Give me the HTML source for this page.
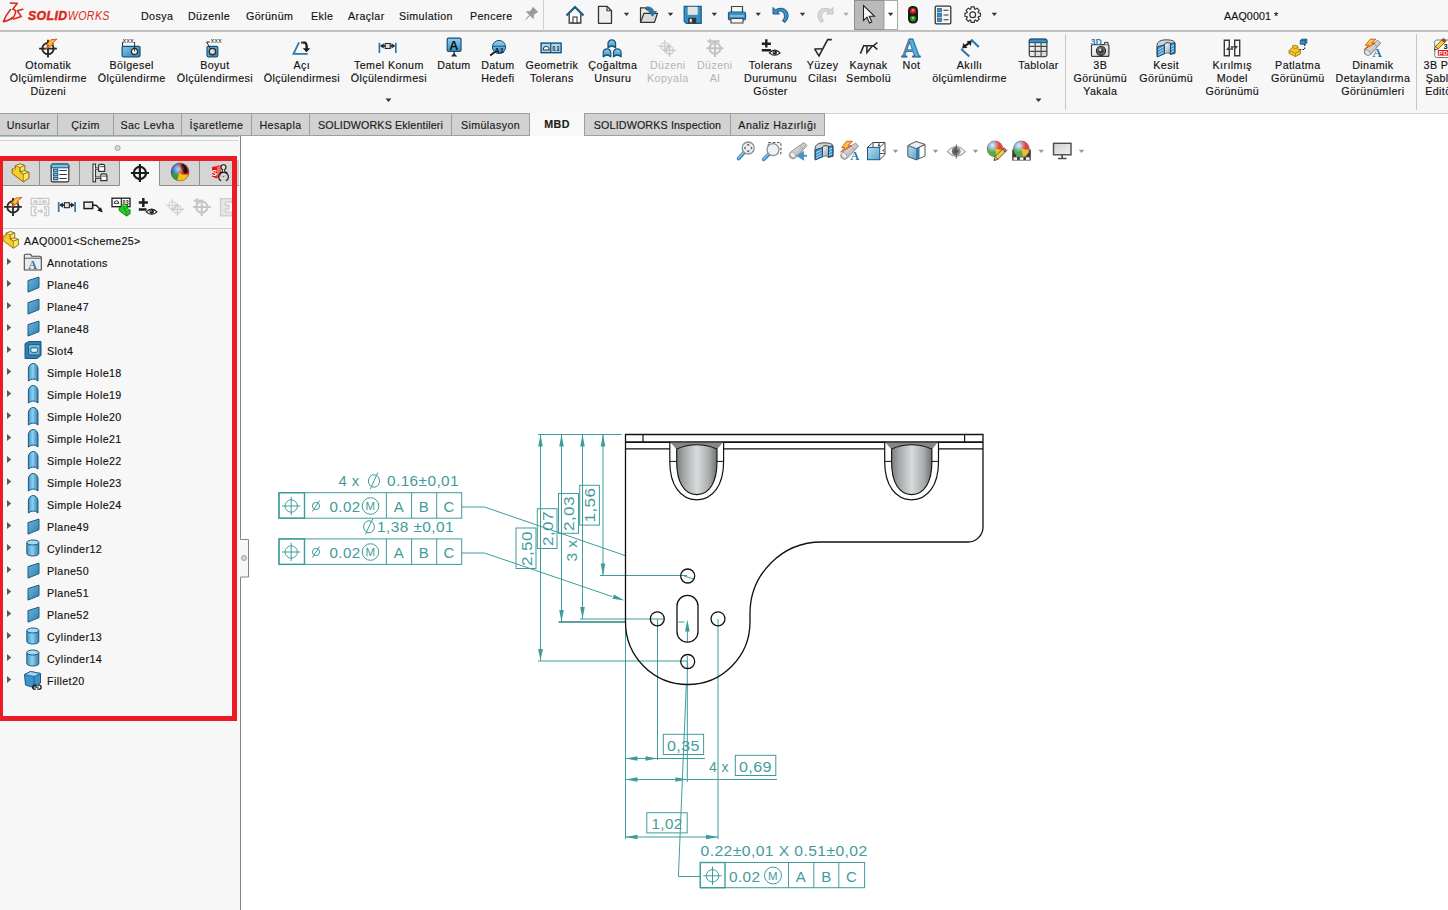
<!DOCTYPE html>
<html><head><meta charset="utf-8">
<style>
*{box-sizing:border-box;margin:0;padding:0}
html,body{width:1448px;height:910px;overflow:hidden;background:#fff}
body{font-family:"Liberation Sans",sans-serif;font-size:10.7px;letter-spacing:.4px;color:#111;position:relative;-webkit-text-stroke:.15px #111}
.abs{position:absolute}
#title{left:0;top:0;width:1448px;height:32px;background:#f7f7f7;border-bottom:2px solid #c0c0c0}
#ribbon{left:0;top:32px;width:1448px;height:81px;background:#f7f7f7}
.menu{position:absolute;top:9.5px;color:#111;white-space:nowrap}
.rl{position:absolute;top:58.5px;transform:translateX(-50%);text-align:center;line-height:13.2px;white-space:nowrap;color:#111}
.rl.dis{color:#b4b4b4;-webkit-text-stroke:0}
#tabs{left:0;top:113px;width:1448px;height:23px}
.tab{position:absolute;top:0;height:23px;background:#d2d2d2;border:1px solid #9e9e9e;border-left:none;text-align:center;line-height:22px;color:#222;white-space:nowrap}
.tab.act{background:#f8f8f8;border-top:none;border-bottom:none;font-weight:bold}
#panel{left:0;top:136px;width:240px;height:774px;background:#f7f7f7}
.tr{position:absolute;left:47px;color:#111;white-space:nowrap;line-height:14px}
.ar{position:absolute;left:6px;width:0;height:0;border-left:5px solid #555;border-top:4px solid transparent;border-bottom:4px solid transparent}
</style></head><body>
<div id="title" class="abs"></div>
<div id="ribbon" class="abs"></div>
<div id="tabs" class="abs"><div class="tab" style="left:0px;width:58px">Unsurlar</div><div class="tab" style="left:58px;width:56px">Çizim</div><div class="tab" style="left:114px;width:68px">Sac Levha</div><div class="tab" style="left:182px;width:70px">İşaretleme</div><div class="tab" style="left:252px;width:58px">Hesapla</div><div class="tab" style="left:310px;width:142px;letter-spacing:.15px">SOLIDWORKS Eklentileri</div><div class="tab" style="left:452px;width:78px">Simülasyon</div><div class="tab act" style="left:530px;width:55px">MBD</div><div class="tab" style="left:585px;width:146px;letter-spacing:.15px">SOLIDWORKS Inspection</div><div class="tab" style="left:731px;width:94px">Analiz Hazırlığı</div></div>
<div id="panel" class="abs"></div><div class="abs" style="left:825px;top:113px;width:623px;height:1px;background:#d2d2d2"></div>
<div class="menu" style="left:141px">Dosya</div><div class="menu" style="left:188px">Düzenle</div><div class="menu" style="left:246px">Görünüm</div><div class="menu" style="left:311px">Ekle</div><div class="menu" style="left:348px">Araçlar</div><div class="menu" style="left:399px">Simulation</div><div class="menu" style="left:470px">Pencere</div><div class="menu" style="left:1224px;letter-spacing:.1px">AAQ0001 *</div>
<div class="rl" style="left:48.3px">Otomatik<br>Ölçümlendirme<br>Düzeni</div><div class="rl" style="left:131.7px">Bölgesel<br>Ölçülendirme</div><div class="rl" style="left:214.9px">Boyut<br>Ölçülendirmesi</div><div class="rl" style="left:301.9px">Açı<br>Ölçülendirmesi</div><div class="rl" style="left:388.9px">Temel Konum<br>Ölçülendirmesi</div><div class="rl" style="left:453.9px">Datum</div><div class="rl" style="left:497.9px">Datum<br>Hedefi</div><div class="rl" style="left:551.9px">Geometrik<br>Tolerans</div><div class="rl" style="left:612.8px">Çoğaltma<br>Unsuru</div><div class="rl dis" style="left:667.8px">Düzeni<br>Kopyala</div><div class="rl dis" style="left:714.8px">Düzeni<br>Al</div><div class="rl" style="left:770.6px">Tolerans<br>Durumunu<br>Göster</div><div class="rl" style="left:822.6px">Yüzey<br>Cilası</div><div class="rl" style="left:868.6px">Kaynak<br>Sembolü</div><div class="rl" style="left:911.5px">Not</div><div class="rl" style="left:969.6px">Akıllı<br>ölçümlendirme</div><div class="rl" style="left:1038.5px">Tablolar</div><div class="rl" style="left:1100.3px">3B<br>Görünümü<br>Yakala</div><div class="rl" style="left:1166.2px">Kesit<br>Görünümü</div><div class="rl" style="left:1232.3px">Kırılmış<br>Model<br>Görünümü</div><div class="rl" style="left:1297.8px">Patlatma<br>Görünümü</div><div class="rl" style="left:1372.9px">Dinamik<br>Detaylandırma<br>Görünümleri</div><div class="rl" style="left:1443.5px">3B PDF<br>Şablon<br>Editörü</div>
<!--ICONS_PANEL_START--><svg class="abs" style="left:0;top:136px" width="250" height="774" viewBox="0 136 250 774"><defs>
<linearGradient id="pl" x1="0" y1="0" x2="1" y2="1"><stop offset="0" stop-color="#6cb4dc"/><stop offset="1" stop-color="#2f7fb0"/></linearGradient>
<linearGradient id="cy" x1="0" y1="0" x2="1" y2="0"><stop offset="0" stop-color="#3f93c6"/><stop offset="0.45" stop-color="#8fd0f0"/><stop offset="1" stop-color="#2f7fb0"/></linearGradient>
<radialGradient id="ball" cx="0.4" cy="0.35" r="0.7"><stop offset="0" stop-color="#fff" stop-opacity="0.7"/><stop offset="0.5" stop-color="#fff" stop-opacity="0"/></radialGradient>
<g id="ypart"><path d="M-8.4,-3.9 L-5.3,-5.3 V-7.2 L-0.4,-9 L4.1,-7.5 V-2.2 L8.2,-0.6 V5.2 L2.7,8.8 L-8.4,0.5 Z" fill="#f6cf2a" stroke="#8a6508" stroke-width="1" stroke-linejoin="round"/><path d="M-5.3,-7.2 L-0.4,-9 L4.1,-7.5 L-0.6,-5.5 Z" fill="#fdf0a0" stroke="#8a6508" stroke-width="0.7" stroke-linejoin="round"/><path d="M-0.6,-5.5 L4.1,-7.5 V-2.2 L-0.6,-1.1 Z" fill="#fbe56a" stroke="#8a6508" stroke-width="0.7" stroke-linejoin="round"/><path d="M-0.6,-1.1 L4.1,-2.2 L8.2,-0.6 L2.7,1.1 Z" fill="#fdf0a0" stroke="#8a6508" stroke-width="0.7" stroke-linejoin="round"/><path d="M2.7,1.1 L8.2,-0.6 V5.2 L2.7,8.8 Z" fill="#fbe56a" stroke="#8a6508" stroke-width="0.7" stroke-linejoin="round"/><path d="M-8.4,-3.9 L-5.3,-5.3 L-5.3,-3.4 L-7,-2.7 Z" fill="#fdf0a0" stroke="#8a6508" stroke-width="0.6"/><path d="M-0.6,-5.5 V-1.1 L2.7,1.1" fill="none" stroke="#8a6508" stroke-width="0.7"/></g>
<g id="gpart"><path d="M-8.4,-3.9 L-5.3,-5.3 V-7.2 L-0.4,-9 L4.1,-7.5 V-2.2 L8.2,-0.6 V5.2 L2.7,8.8 L-8.4,0.5 Z" fill="#1fd11f" stroke="#0a6a0a" stroke-width="1.2" stroke-linejoin="round"/><path d="M-5.3,-7.2 L-0.4,-9 L4.1,-7.5 L-0.6,-5.5 Z M-0.6,-1.1 L4.1,-2.2 L8.2,-0.6 L2.7,1.1 Z" fill="#6af06a" stroke="#0a6a0a" stroke-width="0.7" stroke-linejoin="round"/><path d="M-0.6,-5.5 V-1.1 L2.7,1.1 V8.8" fill="none" stroke="#0a6a0a" stroke-width="0.8"/></g>
<linearGradient id="bx" x1="0" y1="0" x2="1" y2="1"><stop offset="0" stop-color="#7cc6ec"/><stop offset="1" stop-color="#2f84b6"/></linearGradient>
<linearGradient id="yl" x1="0" y1="0" x2="1" y2="1"><stop offset="0" stop-color="#ffe04a"/><stop offset="1" stop-color="#f39a1e"/></linearGradient>
<linearGradient id="grp" x1="0" y1="0" x2="1" y2="1"><stop offset="0" stop-color="#ffffff"/><stop offset="1" stop-color="#cfcfcf"/></linearGradient>
<g id="plane"><path d="M-5.5,-4 L5.5,-7.5 V3 L-5.5,7.5 Z" fill="url(#pl)" stroke="#1b5a80" stroke-width="1" stroke-linejoin="round"/></g>
<g id="hole"><path d="M-4.8,8.5 V-3.5 A4.8,5.5 0 0 1 4.8,-3.5 V8.5 Q0,4.5 -4.8,8.5 Z" fill="url(#cy)" stroke="#1b5a80" stroke-width="1" stroke-linejoin="round"/></g>
<g id="cyl"><path d="M-6,-5.5 V5.5 A6,2.5 0 0 0 6,5.5 V-5.5" fill="url(#cy)" stroke="#1b5a80" stroke-width="1"/><ellipse cx="0" cy="-5.5" rx="6" ry="2.5" fill="#a6dbf5" stroke="#1b5a80" stroke-width="1"/></g>
<g id="arr"><path d="M0,-3.6 L4.2,0 L0,3.6 Z" fill="#5a5a5a"/></g>
</defs><path d="M0,136.5 H239" stroke="#a9c4d4" stroke-width="1"/><path d="M0,140.5 H238" stroke="#d4d4d4" stroke-width="1"/><circle cx="117.6" cy="148" r="2.6" fill="#d8d8d8" stroke="#9a9a9a" stroke-width="0.8"/><rect x="0" y="160" width="39.5" height="25.5" fill="#d5d5d5"/><path d="M0,185.5 H39.5" stroke="#8e8e8e"/><rect x="39.5" y="160" width="40.0" height="25.5" fill="#d5d5d5"/><path d="M39.5,185.5 H79.5" stroke="#8e8e8e"/><rect x="79.5" y="160" width="40.0" height="25.5" fill="#d5d5d5"/><path d="M79.5,185.5 H119.5" stroke="#8e8e8e"/><rect x="119.5" y="160" width="40.0" height="26" fill="#f7f7f7"/><rect x="159.5" y="160" width="40.0" height="25.5" fill="#d5d5d5"/><path d="M159.5,185.5 H199.5" stroke="#8e8e8e"/><rect x="199.5" y="160" width="39.5" height="25.5" fill="#d5d5d5"/><path d="M199.5,185.5 H239" stroke="#8e8e8e"/><path d="M39.5,160 V185.5" stroke="#8e8e8e" stroke-width="1"/><path d="M79.5,160 V185.5" stroke="#8e8e8e" stroke-width="1"/><path d="M119.5,160 V185.5" stroke="#8e8e8e" stroke-width="1"/><path d="M159.5,160 V185.5" stroke="#8e8e8e" stroke-width="1"/><path d="M199.5,160 V185.5" stroke="#8e8e8e" stroke-width="1"/><use href="#ypart" transform="translate(20.6,173)"/><g transform="translate(60,173)"><rect x="-8.8" y="-8.9" width="17.6" height="17.7" rx="1.6" fill="#fdfdfd" stroke="#333" stroke-width="1.2"/><path d="M-8.8,-5.2 V-7.3 Q-8.8,-8.9 -7.2,-8.9 H7.2 Q8.8,-8.9 8.8,-7.3 V-5.2 Z" fill="#7cc0e4" stroke="#14507a" stroke-width="1"/><rect x="-6.6" y="-3.8" width="4.4" height="2.6" fill="#7cc0e4" stroke="#14507a" stroke-width="1"/><rect x="-6.6" y="0.2" width="4.4" height="2.6" fill="#7cc0e4" stroke="#14507a" stroke-width="1"/><rect x="-6.6" y="4.2" width="4.4" height="2.6" fill="#7cc0e4" stroke="#14507a" stroke-width="1"/><path d="M-0.6,-2.5 H6.8 M-0.6,1.5 H6.8 M-0.6,5.5 H6.8" stroke="#333" stroke-width="1.1"/></g><g transform="translate(99.6,173)"><rect x="-6.6" y="-8.9" width="2.5" height="17.7" fill="#fff" stroke="#333" stroke-width="1.1"/><path d="M-4.1,-4.4 H-1 M-4.1,4.7 H1.2" stroke="#333" stroke-width="2.4"/><path d="M-4.1,-4.4 H-1 M-4.1,4.7 H1.2" stroke="#fff" stroke-width="0.7"/><path d="M-1,-7 Q-1,-8.6 0.6,-8.6 H3.5 Q5.1,-8.6 5.1,-7 V-1.7 H-1 Z" fill="#fff" stroke="#333" stroke-width="1.2" stroke-linejoin="round"/><path d="M0.3,-6.3 H5" stroke="#333" stroke-width="0.9"/><path d="M1.2,2.4 Q1.2,0.8 2.8,0.8 H5.7 Q7.3,0.8 7.3,2.4 V7.7 H1.2 Z" fill="#fff" stroke="#333" stroke-width="1.2" stroke-linejoin="round"/><path d="M2.5,3.1 H7.2" stroke="#333" stroke-width="0.9"/></g><g transform="translate(139.9,173)"><circle cx="0" cy="0" r="6.1" fill="none" stroke="#1a1a1a" stroke-width="2.2"/><path d="M-9,0 H9.1 M0,-9 V8.9" stroke="#1a1a1a" stroke-width="2.2"/></g><g transform="translate(180.1,171.9)"><circle r="9" fill="#d8271c"/><path d="M-1,1 L-9,1.5 A9,9 0 0 1 -1.5,-8.87 Z" fill="#2a6fc9"/><path d="M-1,1 L-9,1.5 A9,9 0 0 0 -3,8.49 Z" fill="#28a13c"/><path d="M-1,1 L-3,8.49 A9,9 0 0 0 8.6,2.6 Q4,3.5 -1,1 Z" fill="#f2c21a"/><ellipse cx="4.1" cy="-3.2" rx="2.6" ry="5.2" transform="rotate(-32 4.1 -3.2)" fill="#1a1210"/><circle r="9" fill="url(#ball)"/><circle r="9" fill="none" stroke="#6a3a2a" stroke-width="0.6" opacity="0.7"/></g><g transform="translate(220,173)"><path d="M-8,-6 L0.5,-8 V3 L-3,5.3 L-8,3.5 Z" fill="#ee2a24"/><path d="M0.5,-8 L-3,-5.5 V5.3 L0.5,3 Z" fill="#f46a60"/><path d="M-8,-6 L-3,-5.5 V5.3 L-8,3.5 Z" fill="#e8141c"/><text x="-5.4" y="2.6" font-size="8.5" font-weight="bold" fill="#fff" text-anchor="middle" font-family="Liberation Sans">S</text><circle cx="3.5" cy="-5.8" r="2.5" fill="#f6dada" stroke="#1a1a1a" stroke-width="1.1"/><path d="M2.6,-3.4 L2,-0.6 H5 L4.4,-3.4" fill="#fff" stroke="#1a1a1a" stroke-width="1"/><path d="M0,-0.6 H7.4" stroke="#1a1a1a" stroke-width="1.3"/><path d="M1.2,7.8 A4.3,4.3 0 0 1 1.8,-0.3 M5.8,7.8 A4.3,4.3 0 0 0 5.2,-0.3" fill="none" stroke="#1a1a1a" stroke-width="1.1"/><path d="M2,3.8 L4.8,2.4 L4,3.9 Z" fill="#e8141c"/></g><g transform="translate(13,206.9)"><circle cx="0" cy="0" r="5.7" fill="none" stroke="#2a2a2a" stroke-width="1.9"/><path d="M-8.9,0 H8.9 M0,-8.9 V9" stroke="#2a2a2a" stroke-width="1.9" fill="none"/><path d="M8.9,-9.5 L2.7,-8.8 L-1.8,-3.4 L1,-3.4 L-2.7,0.7 L6,-4.7 L3.7,-4.8 Z" fill="url(#yl)" stroke="#d4501a" stroke-width="0.9" stroke-linejoin="round"/></g><g transform="translate(40,207)" fill="none" stroke="#c9c9c9" stroke-width="1.2"><rect x="-8.8" y="-8.6" width="17.6" height="6"/><path d="M0,-8.6 V-2.6"/><path d="M-6.2,-4.6 A1.8,1.8 0 0 1 -2.6,-4.6 Z M2.6,-4.6 A1.8,1.8 0 0 1 6.2,-4.6 Z"/><path d="M-8.8,-0.3 H-4 V2.5 H-5.5 V5.8 H-4 V8.6 H-8.8 Z M8.8,-0.3 H4.5 V2 H6.3 V6.3 H4.5 V8.6 H8.8 Z"/><path d="M-2.5,4.2 H1.5" stroke-width="1.8"/><path d="M0.5,1.6 L3.6,4.2 L0.5,6.8 Z" fill="#c9c9c9" stroke="none"/></g><g transform="translate(66.9,206.7)"><path d="M-8.2,-4.7 V5.3 M8.2,-4.7 V5.3" stroke="#2a78ad" stroke-width="1.7"/><path d="M-6.5,-1.6 H6.5" stroke="#2a2a2a" stroke-width="1.7"/><path d="M-7.7,-1.6 L-4,-4.3 V1.1 Z M7.7,-1.6 L4,-4.3 V1.1 Z" fill="#2a2a2a"/><rect x="-2.5" y="-4" width="5" height="5" fill="#e2e2e2" stroke="#2a2a2a" stroke-width="1.1"/></g><g transform="translate(93.4,207)"><rect x="-9.4" y="-4.9" width="8.7" height="6.5" fill="url(#grp)" stroke="#1a1a1a" stroke-width="1.4"/><path d="M-0.7,-1.7 H1.8 Q3.2,-1.7 4,-0.6 L6.5,2.2" stroke="#1a1a1a" stroke-width="1.5" fill="none"/><path d="M9.4,5.4 L3.8,3.6 L7.6,0.2 Z" fill="#1a1a1a"/></g><g transform="translate(121,207)"><rect x="-9" y="-8.8" width="18" height="8.5" fill="#fff" stroke="#1a1a1a" stroke-width="1.3"/><path d="M0.3,-8.8 V-0.3" stroke="#1a1a1a" stroke-width="1.1"/><path d="M-6.8,-3.6 A2.3,2.6 0 0 1 -2.2,-3.6 Z" fill="#fff" stroke="#1a1a1a" stroke-width="0.9"/><text x="4.7" y="-2" font-size="6.6" font-weight="bold" fill="#1a1a1a" text-anchor="middle" font-family="Liberation Sans" textLength="6.4" lengthAdjust="spacingAndGlyphs">03</text><use href="#gpart" transform="translate(3.7,3.3) scale(0.66)"/></g><g transform="translate(147.5,207.5)"><path d="M-8.7,-5.1 H0.4 M-4.2,-9.6 V-0.6 M-8.7,1.9 H-0.9" stroke="#1f1f1f" stroke-width="2.5"/><path d="M-1.3,4.4 Q4.1,-1.1 9.5,4.4 Q4.1,9.1 -1.3,4.4 Z" fill="#fff" stroke="#1f1f1f" stroke-width="1.1"/><circle cx="4.2" cy="4.1" r="2.3" fill="#1f1f1f"/><circle cx="3.5" cy="3.5" r="0.7" fill="#ddd"/></g><g transform="translate(175,207.3)"><circle cx="-2.7" cy="-2" r="3.8" fill="none" stroke="#d4d4d4" stroke-width="1.2"/><path d="M-9.2,-2 H3.8 M-2.7,-8.5 V4.5" stroke="#d4d4d4" stroke-width="1.2"/><circle cx="2.5" cy="2.1" r="3.8" fill="none" stroke="#cacaca" stroke-width="1.2"/><path d="M-4,2.1 H9 M2.5,-4.4 V8.6" stroke="#cacaca" stroke-width="1.2"/></g><g transform="translate(201.8,207.1)"><circle cx="0" cy="0" r="5.6" fill="none" stroke="#c6c6c6" stroke-width="2"/><path d="M-8.8,0 H9 M0,-6.3 V8.8" stroke="#c6c6c6" stroke-width="2"/><path d="M-4.5,-6.4 H1.5" stroke="#c6c6c6" stroke-width="2.2"/><path d="M-8.6,-6.4 L-4,-9.4 V-3.4 Z" fill="#c6c6c6"/></g><g transform="translate(229,207.2)" fill="#e6e6e6" stroke="#cdcdcd" stroke-width="1.3"><path d="M-8.5,-8.6 H3 V-5 H-3.5 V-2 H0 V2 H-3.5 V5 H3 V8.6 H-8.5 Z"/></g><path d="M3,228.5 H232" stroke="#cfcfcf" stroke-width="1"/><use href="#ypart" transform="translate(10.8,240) scale(0.93)"/><use href="#arr" transform="translate(7,261.5)"/><g transform="translate(32.8,262)"><path d="M-8.5,8 V-6.5 Q-8.5,-7.8 -7.2,-7.8 H-2.5 L-1,-5.8 H7.2 Q8.5,-5.8 8.5,-4.5 V8 Z" fill="#ececec" stroke="#4a4a4a" stroke-width="1.1" stroke-linejoin="round"/><path d="M-8.5,-3.8 H8.5" stroke="#4a4a4a" stroke-width="0.9"/><text x="0" y="6.5" font-size="12" font-weight="bold" fill="#2a78ad" text-anchor="middle" font-family="Liberation Serif">A</text></g><use href="#arr" transform="translate(7,283.5)"/><use href="#plane" transform="translate(33.5,284.6)"/><use href="#arr" transform="translate(7,305.5)"/><use href="#plane" transform="translate(33.5,306.6)"/><use href="#arr" transform="translate(7,327.5)"/><use href="#plane" transform="translate(33.5,328.6)"/><use href="#arr" transform="translate(7,349.5)"/><g transform="translate(33,350)"><path d="M-8,-6.5 L-4,-8.5 H8 V5.5 L4,8.5 H-8 Z" fill="#2f7fb0" stroke="#1b5a80" stroke-width="1" stroke-linejoin="round"/><path d="M-4.5,-5.5 H7 V5 H-4.5 Z" fill="#6cb4dc" stroke="#1b5a80" stroke-width="0.9"/><rect x="-2.3" y="-2.2" width="7" height="4.6" rx="2" fill="#d9eefa" stroke="#1b5a80" stroke-width="1"/></g><use href="#arr" transform="translate(7,371.5)"/><use href="#hole" transform="translate(33.2,372.5)"/><use href="#arr" transform="translate(7,393.5)"/><use href="#hole" transform="translate(33.2,394.5)"/><use href="#arr" transform="translate(7,415.5)"/><use href="#hole" transform="translate(33.2,416.5)"/><use href="#arr" transform="translate(7,437.5)"/><use href="#hole" transform="translate(33.2,438.5)"/><use href="#arr" transform="translate(7,459.5)"/><use href="#hole" transform="translate(33.2,460.5)"/><use href="#arr" transform="translate(7,481.5)"/><use href="#hole" transform="translate(33.2,482.5)"/><use href="#arr" transform="translate(7,503.5)"/><use href="#hole" transform="translate(33.2,504.5)"/><use href="#arr" transform="translate(7,525.5)"/><use href="#plane" transform="translate(33.5,526.6)"/><use href="#arr" transform="translate(7,547.5)"/><use href="#cyl" transform="translate(32.8,548)"/><use href="#arr" transform="translate(7,569.5)"/><use href="#plane" transform="translate(33.5,570.6)"/><use href="#arr" transform="translate(7,591.5)"/><use href="#plane" transform="translate(33.5,592.6)"/><use href="#arr" transform="translate(7,613.5)"/><use href="#plane" transform="translate(33.5,614.6)"/><use href="#arr" transform="translate(7,635.5)"/><use href="#cyl" transform="translate(32.8,636)"/><use href="#arr" transform="translate(7,657.5)"/><use href="#cyl" transform="translate(32.8,658)"/><use href="#arr" transform="translate(7,679.5)"/><g transform="translate(32.5,680)"><path d="M-8,-5.5 L-2,-8.5 L8,-6.5 V3 L1,7.5 L-7,5 Z" fill="#3f93c6" stroke="#1b5a80" stroke-width="1" stroke-linejoin="round"/><path d="M-8,-5.5 L-2,-8.5 L8,-6.5 L1.5,-3.5 Z" fill="#9fd6f2" stroke="#1b5a80" stroke-width="0.8"/><path d="M1.5,-3.5 V7.5" stroke="#1b5a80" stroke-width="0.8"/><path d="M4.2,5.2 H2.2 a2,2 0 0 0 0,4 H3.4 M4.6,9.2 H6.6 a2,2 0 0 0 0,-4 H5.4 M2.8,7.2 H6" fill="none" stroke="#1a1a1a" stroke-width="1.3"/></g><path d="M239,539.5 H248.5 V577 H239 Z" fill="#f7f7f7" stroke="none"/><path d="M240.5,136 V539.5 H248.5 V577 H240.5 V910" fill="none" stroke="#858585" stroke-width="1"/><circle cx="244" cy="558" r="2.5" fill="#d6d6d6" stroke="#8e8e8e" stroke-width="0.8"/></svg><!--ICONS_PANEL_END--><div class="tr" style="left:24px;top:234px">AAQ0001&lt;Scheme25&gt;</div><div class="tr" style="top:256px">Annotations</div><div class="tr" style="top:278px">Plane46</div><div class="tr" style="top:300px">Plane47</div><div class="tr" style="top:322px">Plane48</div><div class="tr" style="top:344px">Slot4</div><div class="tr" style="top:366px">Simple Hole18</div><div class="tr" style="top:388px">Simple Hole19</div><div class="tr" style="top:410px">Simple Hole20</div><div class="tr" style="top:432px">Simple Hole21</div><div class="tr" style="top:454px">Simple Hole22</div><div class="tr" style="top:476px">Simple Hole23</div><div class="tr" style="top:498px">Simple Hole24</div><div class="tr" style="top:520px">Plane49</div><div class="tr" style="top:542px">Cylinder12</div><div class="tr" style="top:564px">Plane50</div><div class="tr" style="top:586px">Plane51</div><div class="tr" style="top:608px">Plane52</div><div class="tr" style="top:630px">Cylinder13</div><div class="tr" style="top:652px">Cylinder14</div><div class="tr" style="top:674px">Fillet20</div>
<div class="abs" style="left:-2px;top:156px;width:239px;height:565px;border:5px solid #ec1c24"></div>
<!--DRAWING_START--><svg class="abs" style="left:0;top:0" width="1448" height="910" viewBox="0 0 1448 910" font-family="Liberation Sans, sans-serif">
<defs>
<linearGradient id="cup" x1="0" x2="1" y1="0" y2="0"><stop offset="0" stop-color="#7c7e7e"/><stop offset="0.18" stop-color="#a4a7a7"/><stop offset="0.5" stop-color="#d6dcdc"/><stop offset="0.8" stop-color="#a9acac"/><stop offset="1" stop-color="#6f7171"/></linearGradient>
<g id="cupg">
<path d="M670.5,442.5 H722.8 L717,449.5 Q696.5,440 676.7,449.5 Z" fill="#858787" stroke="none"/>
<path d="M676.7,449 Q696.5,440.5 717,449 V462 C717,482 709.5,494.6 696.8,494.6 C684,494.6 676.7,482 676.7,462 Z" fill="url(#cup)" stroke="#111" stroke-width="1.1"/>
<path d="M669.8,442 V461.4 C669.8,485 680.5,499.8 696.7,499.8 C713,499.8 723.6,485 723.6,461.4 V442" fill="none" stroke="#111" stroke-width="1.2"/>
<path d="M669.8,461.4 H676.7 M717,461.4 H723.6" stroke="#111" stroke-width="1" fill="none"/>
</g>
<path id="ah" d="M0,0 L-12,-2.3 L-12,2.3 Z"/>
</defs>
<!-- teal dimension graphics -->
<g id="dims" stroke="#3f9c9c" stroke-width="1" fill="none">
<!-- top extension -->
<path d="M538,434.5 H621.5"/>
<path d="M540.5,434.5 V661 M561.5,434.5 V622 M582.5,434.5 V619 M603,434.5 V575.5"/>
<path d="M538,661 H687.5 M580,619 H664 M600,575.5 H687"/>
<path d="M558.5,622 H625" stroke="#2c8080" stroke-width="1.3"/>
<!-- leaders -->
<path d="M461.7,507 H484.5 L625,555.5"/>
<path d="M681.5,575 L693.5,579"/>
<path d="M461.7,553 H484.5 L612,596.5"/>
<!-- bottom verticals -->
<path d="M625.5,626 V839 M657.5,619 V760 M687.3,662 V782 M718,619 V839"/>
<path d="M625.5,758.5 H705 M625.5,779.5 H777 M625.5,837 H718"/>
<path d="M686.3,684 L678.4,876.5 H700.3"/>
<path d="M678.5,622 H684.5 M687.4,630 V641.5 M687.3,656 V668"/>
<!-- boxes for rotated dims -->
<rect x="516" y="528" width="20" height="40.5"/>
<rect x="537.3" y="508.7" width="19.7" height="39.8"/>
<rect x="558.5" y="493.5" width="20" height="39.8"/>
<rect x="579.7" y="485.3" width="19.7" height="39.8"/>
<rect x="663.3" y="734.3" width="40.3" height="20.2"/>
<rect x="735.3" y="755.3" width="40.5" height="20.2"/>
<rect x="646.8" y="812.7" width="40.4" height="20.2"/>
<!-- frames -->
<g id="fr1">
<rect x="279" y="492.7" width="182.7" height="25.5"/>
<rect x="279" y="492.7" width="25.5" height="25.5" stroke-width="1.4"/>
<path d="M386.4,492.7 V518.2 M411.6,492.7 V518.2 M436.7,492.7 V518.2"/>
<circle cx="291.2" cy="506" r="6.2"/><path d="M282,506 H300.4 M291.2,496.8 V515.2"/>
<circle cx="316" cy="506" r="3.6"/><path d="M312.5,511.5 L319.5,500.5"/>
<circle cx="370.5" cy="506" r="8.3"/>
</g>
<g id="fr2">
<rect x="279" y="538.9" width="182.7" height="25.5"/>
<rect x="279" y="538.9" width="25.5" height="25.5" stroke-width="1.4"/>
<path d="M386.4,538.9 V564.4 M411.6,538.9 V564.4 M436.7,538.9 V564.4"/>
<circle cx="291.2" cy="552" r="6.2"/><path d="M282,552 H300.4 M291.2,542.8 V561.2"/>
<circle cx="316" cy="552" r="3.6"/><path d="M312.5,557.5 L319.5,546.5"/>
<circle cx="370.5" cy="552" r="8.3"/>
</g>
<g id="fr3">
<rect x="700.3" y="862.5" width="164.3" height="25.2"/>
<rect x="700.3" y="862.5" width="24.7" height="25.2" stroke-width="1.4"/>
<path d="M788.5,862.5 V887.7 M813.8,862.5 V887.7 M838.8,862.5 V887.7"/>
<circle cx="712.5" cy="875.8" r="6.2"/><path d="M703.3,875.8 H721.7 M712.5,866.6 V885"/>
<circle cx="773" cy="875.5" r="8.5"/>
</g>
<!-- diameter symbols in text -->
<ellipse cx="374" cy="481" rx="5.6" ry="6.2"/><path d="M370.3,489 L377.8,472.5"/>
<ellipse cx="369" cy="526.8" rx="5.4" ry="6"/><path d="M365.3,534.5 L372.8,518.8"/>
</g>
<!-- arrowheads -->
<g fill="#3f9c9c" stroke="none">
<use href="#ah" transform="translate(540.5,434.5) rotate(-90)"/><use href="#ah" transform="translate(540.5,661) rotate(90)"/>
<use href="#ah" transform="translate(561.5,434.5) rotate(-90)"/><use href="#ah" transform="translate(561.5,622) rotate(90)"/>
<use href="#ah" transform="translate(582.5,434.5) rotate(-90)"/><use href="#ah" transform="translate(582.5,619) rotate(90)"/>
<use href="#ah" transform="translate(603,434.5) rotate(-90)"/><use href="#ah" transform="translate(603,575.5) rotate(90)"/>
<use href="#ah" transform="translate(624.5,600.5) rotate(19)"/>
<use href="#ah" transform="translate(625.5,758.5) rotate(180)"/><use href="#ah" transform="translate(657.5,758.5)"/>
<use href="#ah" transform="translate(625.5,779.5) rotate(180)"/><use href="#ah" transform="translate(687.3,779.5)"/>
<use href="#ah" transform="translate(625.5,837) rotate(180)"/><use href="#ah" transform="translate(718,837)"/>
<use href="#ah" transform="translate(687.4,619.5) rotate(-90)"/>
</g>
<!-- teal text -->
<g fill="#3f9c9c" stroke="none" font-size="15.5">
<text x="338.5" y="486" textLength="21" lengthAdjust="spacingAndGlyphs">4 x</text>
<text x="387" y="486" textLength="72" lengthAdjust="spacingAndGlyphs">0.16±0,01</text>
<text x="377" y="532.3" textLength="77" lengthAdjust="spacingAndGlyphs">1,38 ±0,01</text>
<text x="329.5" y="512" textLength="31" lengthAdjust="spacingAndGlyphs">0.02</text>
<text x="329.5" y="558" textLength="31" lengthAdjust="spacingAndGlyphs">0.02</text>
<text x="370.5" y="510.3" font-size="11.5" text-anchor="middle">M</text>
<text x="370.5" y="556.3" font-size="11.5" text-anchor="middle">M</text>
<text x="399" y="512" text-anchor="middle" font-size="15">A</text><text x="424" y="512" text-anchor="middle" font-size="15">B</text><text x="449" y="512" text-anchor="middle" font-size="15">C</text>
<text x="399" y="558" text-anchor="middle" font-size="15">A</text><text x="424" y="558" text-anchor="middle" font-size="15">B</text><text x="449" y="558" text-anchor="middle" font-size="15">C</text>
<text transform="translate(531.8,566) rotate(-90)" textLength="35" lengthAdjust="spacingAndGlyphs">2,50</text>
<text transform="translate(553,546) rotate(-90)" textLength="35" lengthAdjust="spacingAndGlyphs">2,07</text>
<text transform="translate(574.3,531) rotate(-90)" textLength="35" lengthAdjust="spacingAndGlyphs">2,03</text>
<text transform="translate(595.3,522.5) rotate(-90)" textLength="35" lengthAdjust="spacingAndGlyphs">1,56</text>
<text transform="translate(576.5,561.5) rotate(-90)" textLength="22" lengthAdjust="spacingAndGlyphs">3 x</text>
<text x="667" y="750.5" textLength="33" lengthAdjust="spacingAndGlyphs">0,35</text>
<text x="739" y="771.5" textLength="33" lengthAdjust="spacingAndGlyphs">0,69</text>
<text x="709" y="771.5" textLength="20" lengthAdjust="spacingAndGlyphs">4 x</text>
<text x="651.5" y="829" textLength="31" lengthAdjust="spacingAndGlyphs">1,02</text>
<text x="700.6" y="855.6" textLength="167" lengthAdjust="spacingAndGlyphs">0.22±0,01 X 0.51±0,02</text>
<text x="729" y="881.5" textLength="31.5" lengthAdjust="spacingAndGlyphs">0.02</text>
<text x="773" y="879.8" font-size="11.5" text-anchor="middle">M</text>
<text x="801" y="881.5" text-anchor="middle" font-size="15">A</text><text x="826.5" y="881.5" text-anchor="middle" font-size="15">B</text><text x="851.5" y="881.5" text-anchor="middle" font-size="15">C</text>
</g>
<!-- part -->
<g stroke="#111" fill="none" stroke-width="1.3">
<path d="M625.5,434.5 H983 V527 A15,15 0 0 1 968,542 H821.5 A71.5,71.5 0 0 0 750,613.5 V622 A62.25,62.5 0 0 1 625.5,622 Z"/>
<path d="M625.5,442.1 H983" stroke-width="1.6"/>
<path d="M625.5,448.8 H669.8 M723.6,448.8 H884.7 M938.5,448.8 H983" stroke-width="1.3"/>
<path d="M643,434.5 V442 M964.6,434.5 V442" stroke-width="1.2"/>
<circle cx="687.7" cy="576" r="7"/><circle cx="657.3" cy="618.8" r="7"/><circle cx="718" cy="618.8" r="7"/><circle cx="687.7" cy="661.5" r="7"/>
<rect x="677" y="595.4" width="21" height="46.8" rx="10.5" ry="10.5"/>
</g>
<use href="#cupg"/>
<use href="#cupg" transform="translate(214.9,0)"/>
</svg>
<!--DRAWING_END-->
<!--ICONS_TOP_START--><svg class="abs" style="left:0;top:0" width="1448" height="136" viewBox="0 0 1448 136"><defs>
<linearGradient id="bx" x1="0" y1="0" x2="1" y2="1"><stop offset="0" stop-color="#7cc6ec"/><stop offset="1" stop-color="#2f84b6"/></linearGradient>
<linearGradient id="bxv" x1="0" y1="0" x2="0" y2="1"><stop offset="0" stop-color="#8fd0f0"/><stop offset="1" stop-color="#3d8fc0"/></linearGradient>
<linearGradient id="gr" x1="0" y1="0" x2="1" y2="1"><stop offset="0" stop-color="#ffffff"/><stop offset="1" stop-color="#d4d4d4"/></linearGradient>
<linearGradient id="tel2" x1="0" y1="0" x2="1" y2="1"><stop offset="0" stop-color="#fafafa"/><stop offset="0.5" stop-color="#cfcfcf"/><stop offset="1" stop-color="#8f8f8f"/></linearGradient>
<linearGradient id="yl" x1="0" y1="0" x2="1" y2="1"><stop offset="0" stop-color="#ffe04a"/><stop offset="1" stop-color="#f39a1e"/></linearGradient>
</defs><g transform="translate(48,47.8)"><circle cx="0" cy="0.8" r="5.7" fill="none" stroke="#2a2a2a" stroke-width="1.9"/><path d="M-8.9,0.8 H8.9 M0,-8 V9.7" stroke="#2a2a2a" stroke-width="1.9" fill="none"/><path d="M8.9,-8.7 L2.7,-8 L-1.8,-2.6 L1,-2.6 L-2.7,1.5 L6,-3.9 L3.7,-4 Z" fill="url(#yl)" stroke="#d4501a" stroke-width="0.9" stroke-linejoin="round"/></g><g transform="translate(131,47.5)"><rect x="-8.9" y="-1.2" width="17.9" height="10.5" rx="1.2" fill="url(#bx)" stroke="#14507a" stroke-width="1.2"/><path d="M-8.5,-1.2 V-5.2 H-7.5 M3.6,3.5 V-5.2 H2.6" stroke="#2a2a2a" stroke-width="1" fill="none"/><circle cx="3.5" cy="3.9" r="3.1" fill="#f4f4f4" stroke="#2a2a2a" stroke-width="1.3"/><path d="M3.6,3.8 V0.8" stroke="#2a2a2a" stroke-width="1"/><text x="-8.2" y="-5" font-size="6.6" fill="#222" font-family="Liberation Sans" textLength="11.2" lengthAdjust="spacing">xxx</text></g><g transform="translate(214.5,47.5)"><rect x="-7.5" y="-1.2" width="10.8" height="10.5" rx="1.2" fill="url(#bx)" stroke="#14507a" stroke-width="1.2"/><circle cx="-2.1" cy="4.1" r="3.2" fill="#d9d9d9" stroke="#2a2a2a" stroke-width="1.4"/><path d="M-4.1,1.5 L-7.9,-5.5 H-4.7" stroke="#2a2a2a" stroke-width="1" fill="none"/><text x="-3.8" y="-4.8" font-size="6.6" fill="#222" font-family="Liberation Sans" textLength="11.2" lengthAdjust="spacing">xxx</text></g><g transform="translate(301.5,47)"><path d="M-2.5,-4.7 L-8,6.9 H6.2" stroke="#2a78ad" stroke-width="1.8" fill="none" stroke-linejoin="miter"/><path d="M0.8,-4.4 H3.6 Q5.6,-3 5.1,1.8" stroke="#1a1a1a" stroke-width="2.3" fill="none"/><path d="M1.2,1.2 H8.8 L5,5.2 Z" fill="#1a1a1a"/><path d="M0.3,-6.2 V-2.6 L-0.6,-4.4 Z" fill="#1a1a1a"/></g><g transform="translate(387.7,47.5)"><path d="M-8.3,-4.7 V5.4 M8.1,-4.7 V5.4" stroke="#2a78ad" stroke-width="1.7"/><path d="M-6.5,-1.6 H6.5" stroke="#2a2a2a" stroke-width="1.7"/><path d="M-7.8,-1.6 L-4,-4.3 V1.1 Z M7.6,-1.6 L3.8,-4.3 V1.1 Z" fill="#2a2a2a"/><rect x="-2.5" y="-4" width="5" height="5" fill="#e2e2e2" stroke="#2a2a2a" stroke-width="1.1"/></g><g transform="translate(454.1,47.5)"><rect x="-6.9" y="-9.4" width="13.8" height="13.3" rx="1.2" fill="url(#bxv)" stroke="#14507a" stroke-width="1.2"/><text x="0" y="2" font-size="12.6" font-weight="bold" text-anchor="middle" fill="#111" font-family="Liberation Sans">A</text><path d="M0,3.9 V6.5" stroke="#2a2a2a" stroke-width="1.2"/><path d="M0,5.6 L-3.2,9.1 H3.2 Z" fill="#2a2a2a"/></g><g transform="translate(498,47.5)"><path d="M-2.6,4.1 L-7.8,8" stroke="#1a1a1a" stroke-width="1.9"/><circle cx="1" cy="-0.5" r="6.6" fill="url(#bxv)" stroke="#14507a" stroke-width="1"/><path d="M-5.6,-1.3 H7.6" stroke="#14507a" stroke-width="0.9"/><text x="1.4" y="5" font-size="7.2" font-weight="bold" text-anchor="middle" fill="#111" font-family="Liberation Sans">A1</text></g><g transform="translate(551.3,47.7)"><rect x="-10.2" y="-4.6" width="20" height="9.6" fill="#a9d9f2" stroke="#14507a" stroke-width="1.4"/><path d="M-0.6,-4.6 V5" stroke="#14507a" stroke-width="1.2"/><path d="M-8.2,2.3 A3.1,3.7 0 0 1 -2,2.3 Z" fill="#fff" stroke="#2a2a2a" stroke-width="1"/><text x="4.6" y="3.4" font-size="7.6" font-weight="bold" text-anchor="middle" fill="#111" font-family="Liberation Sans" textLength="7" lengthAdjust="spacingAndGlyphs">0.3</text></g><g transform="translate(612,48)"><path d="M-4.0,-0.20000000000000018 V-4.5 A3.8,3.6 0 0 1 3.5999999999999996,-4.5 V-0.20000000000000018 Q-0.2,-3.8 -4.0,-0.20000000000000018 Z" fill="url(#bxv)" stroke="#14507a" stroke-width="1.2" stroke-linejoin="round"/><path d="M-8.8,8.8 V4.5 A3.8,3.6 0 0 1 -1.2000000000000002,4.5 V8.8 Q-5,5.2 -8.8,8.8 Z" fill="url(#bxv)" stroke="#14507a" stroke-width="1.2" stroke-linejoin="round"/><path d="M1.5,8.8 V4.5 A3.8,3.6 0 0 1 9.1,4.5 V8.8 Q5.3,5.2 1.5,8.8 Z" fill="url(#bxv)" stroke="#14507a" stroke-width="1.2" stroke-linejoin="round"/></g><g transform="translate(667,48)"><circle cx="-2.3" cy="-1.6" r="3.8" fill="none" stroke="#cfcfcf" stroke-width="1.2"/><path d="M-8.8,-1.6 H4.2 M-2.3,-8.1 V4.9" stroke="#cfcfcf" stroke-width="1.2"/><circle cx="2.5" cy="2.3" r="3.8" fill="none" stroke="#c6c6c6" stroke-width="1.2"/><path d="M-4,2.3 H9 M2.5,-4.2 V8.8" stroke="#c6c6c6" stroke-width="1.2"/></g><g transform="translate(714,47.5)"><circle cx="1" cy="0.8" r="5.4" fill="none" stroke="#c2c2c2" stroke-width="2"/><path d="M-7.5,0.8 H9.5 M1,-5.5 V9.5" stroke="#c2c2c2" stroke-width="2"/><path d="M-3.5,-6.2 H5.8" stroke="#c2c2c2" stroke-width="2"/><path d="M-7.2,-6.2 L-3,-9 V-3.4 Z" fill="#c2c2c2"/></g><g transform="translate(770.5,48)"><path d="M-8.7,-4.3 H0.4 M-4.2,-8.8 V-0.5 M-8.7,2.2 H0.4" stroke="#1f1f1f" stroke-width="2.4"/><path d="M-1.2,4.9 Q4.2,-0.6 9.6,4.9 Q4.2,9.6 -1.2,4.9 Z" fill="#fff" stroke="#1f1f1f" stroke-width="1.1"/><circle cx="4.3" cy="4.6" r="2.2" fill="#1f1f1f"/><circle cx="3.6" cy="4" r="0.7" fill="#ddd"/></g><g transform="translate(822.5,47.5)"><path d="M-7.9,1.4 L-3.5,8.4 L5.2,-7.9 H9.3" fill="none" stroke="#2a2a2a" stroke-width="1.6"/><path d="M-7.9,1.4 H-0.2" stroke="#2a2a2a" stroke-width="1.5"/></g><g transform="translate(869,47.5)"><path d="M-8.6,6.1 L-5.3,-1.7 H4.4 L8.4,-5 M4.4,-1.7 L8.4,2" fill="none" stroke="#2a2a2a" stroke-width="1.6"/><path d="M-2.1,-1.7 V5.1 L3.5,-1.7" fill="none" stroke="#2a2a2a" stroke-width="1.5"/></g><g transform="translate(911.4,47.9)"><text x="-0.4" y="8.7" font-size="26.5" font-weight="bold" text-anchor="middle" fill="#5aaede" stroke="#1d5f8c" stroke-width="0.8" font-family="Liberation Serif">A</text></g><g transform="translate(969.8,47.5)"><path d="M-8.6,1.4 L-0.5,9.1 M1.3,-7.9 L9,-0.4" stroke="#2a78ad" stroke-width="2.1"/><path d="M-4.6,-1.6 L-1,-4.4" stroke="#1f1f1f" stroke-width="2.2"/><path d="M-7.6,1 L-6.6,-4.6 L-2.4,0.2 Z M2,-7 L1,-1.4 L-3.2,-6.2 Z" fill="#1f1f1f"/></g><g transform="translate(1038.1,47.9)"><rect x="-8.8" y="-8.7" width="17.6" height="17.4" rx="1.5" fill="url(#gr)" stroke="#4a4a4a" stroke-width="1.3"/><path d="M-8.8,-5.2 V-7.2 Q-8.8,-8.7 -7.3,-8.7 H7.3 Q8.8,-8.7 8.8,-7.2 V-5.2 Z" fill="#3b8fc6" stroke="#14507a" stroke-width="1"/><path d="M-8.8,-1.5 H8.8 M-8.8,3.5 H8.8 M-2.9,-5.2 V8.7 M3,-5.2 V8.7" stroke="#4a4a4a" stroke-width="1.2"/></g><g transform="translate(1100,48)"><rect x="-8.5" y="-3.4" width="17.4" height="11.8" rx="1" fill="url(#gr)" stroke="#3a3a3a" stroke-width="1.2"/><path d="M4.5,-3.4 V-5.6 H8 V-3.4" fill="#ddd" stroke="#3a3a3a" stroke-width="1"/><circle cx="1" cy="2.8" r="4.6" fill="#6a6a6a" stroke="#2a2a2a" stroke-width="1.1"/><circle cx="1" cy="2.8" r="2.6" fill="#3a3a3a"/><circle cx="0.2" cy="1.8" r="1.2" fill="#e8e8e8"/><text x="-9.2" y="-2.6" font-size="8.4" font-weight="bold" fill="#2a78ad" font-family="Liberation Sans" textLength="11.5" lengthAdjust="spacingAndGlyphs">3D</text></g><g transform="translate(1166,48.3)"><path d="M-9,-2.5 Q-9,-8.5 0,-8.5 Q9,-8.5 9,-5 V5 L4.5,6 V-5 Q0,-7 -1.5,-4 V5 L-8.5,8.5 Q-9,8.5 -9,7 Z" fill="#cfd3d6" stroke="#4a4a4a" stroke-width="1"/><path d="M-1.5,-4 Q1,-6.5 4.5,-5 V5.5 Q1,4 -1.5,5.5 Z" fill="url(#tel2)" stroke="#5a5a5a" stroke-width="0.7"/><path d="M-8.7,-1.5 L-1.5,-3.6 V5.5 L-8.7,8.5 Z" fill="#3b8fc6" stroke="#14507a" stroke-width="1"/><path d="M4.5,-4.8 L8.8,-5.5 V4.5 L4.5,6 Z" fill="#3b8fc6" stroke="#14507a" stroke-width="1"/><path d="M-7.8,1.5 L-2.5,-1.5 M-7.8,4.3 L-2.5,1.3 M-7.8,7 L-2.5,4 M5.2,-1.5 L8,-3.2 M5.2,1.3 L8,-0.4 M5.2,4 L8,2.3" stroke="#bfe3f7" stroke-width="1"/></g><g transform="translate(1232,48)"><path d="M-7.7,-7.8 H-2.7 V-1 L-4.6,1.2 H-2.7 V7.8 H-7.7 Z M7.7,-7.8 H2.7 V-1.2 H4.6 L2.7,1 V7.8 H7.7 Z" fill="#fafafa" stroke="#3a3a3a" stroke-width="1.4" stroke-linejoin="miter"/><path d="M-4.6,1.2 H0.5 L-0.5,-1.2 H4.6" fill="none" stroke="#3a3a3a" stroke-width="1.2"/></g><g transform="translate(1298,48)"><path d="M-9,2.5 L-5.5,-0.5 V-2.2 L-2.5,-2.8 L0,-1.6 V1 L2.4,2.3 V6 L-2.5,8.6 L-9,5.5 Z" fill="#f4c431" stroke="#a97a0a" stroke-width="0.9" stroke-linejoin="round"/><path d="M-9,2.5 L-2.5,5.3 V8.6 M-2.5,5.3 L2.4,2.3 M-5.5,-0.5 L-2.8,0.8 L0,-0.6" fill="none" stroke="#a97a0a" stroke-width="0.8"/><path d="M6.7,-3.4 V1.5 H1" stroke="#1f1f1f" stroke-width="1.1" stroke-dasharray="1.5,1.3" fill="none"/><path d="M2.3,-7.5 L4,-8.8 H8.8 V-5 L7.2,-3.8 H2.3 Z" fill="#3b8fc6" stroke="#14507a" stroke-width="0.9"/><path d="M2.3,-7.5 H7.2 V-3.8 M7.2,-7.5 L8.8,-8.8" fill="none" stroke="#14507a" stroke-width="0.7"/></g><g transform="translate(1372,48)"><path d="M5.8,-7.7 L8.7,-4.8 L-1.5,6.5 Q-4.5,8.5 -7,6 Q-9,3.5 -6.5,0.5 Z" fill="url(#tel2)" stroke="#7a7a7a" stroke-width="0.9" stroke-linejoin="round"/><ellipse cx="-4.6" cy="4.6" rx="2.2" ry="3.3" transform="rotate(-42 -4.6 4.6)" fill="#e6e6e6" stroke="#8a8a8a" stroke-width="0.8"/><path d="M2,-4.5 L5.5,-1" stroke="#8a8a8a" stroke-width="0.8"/><path d="M-1.8,-8.8 L3.8,-8.8 L-0.3,-4.7 L3,-4.7 L-7.7,1.3 L-3.3,-2.8 L-6.6,-2.8 Z" fill="url(#yl)" stroke="#c8401a" stroke-width="0.8" stroke-linejoin="round"/><text x="5.4" y="8.8" font-size="13" font-weight="bold" text-anchor="middle" fill="#2a78ad" font-family="Liberation Serif">A</text></g><g transform="translate(1443,48)"><path d="M-8.2,-6 Q-8.2,-8 -6.2,-8 H8 V9.5 H-6.2 Q-8.2,9.5 -8.2,7.5 Z" fill="#fff" stroke="#777" stroke-width="1"/><rect x="-5.2" y="2" width="14" height="5.6" fill="#e8141c"/><text x="-4.2" y="6.9" font-size="6" font-weight="bold" fill="#fff" font-family="Liberation Sans">PDF</text><text x="0.5" y="1" font-size="7.5" font-weight="bold" fill="#111" font-family="Liberation Sans">3</text><g transform="translate(-3,-3.5) rotate(-45)"><rect x="-4.5" y="-1.9" width="9" height="3.8" fill="#f4d23a" stroke="#5a4a1a" stroke-width="0.8"/><path d="M-4.5,-1.9 L-8,0 L-4.5,1.9 Z" fill="#f0e4c8" stroke="#5a4a1a" stroke-width="0.7"/><path d="M-8,0 L-6.6,-0.8 V0.8 Z" fill="#222"/><rect x="4.5" y="-1.9" width="2.4" height="3.8" fill="#d8343a" stroke="#5a4a1a" stroke-width="0.7"/></g></g><path d="M1065.5,34 V110 M1416.5,34 V110" stroke="#c6c6c6" stroke-width="1"/><path d="M385.5,98.5 h6 l-3,3.5 Z M1035.5,98.5 h6 l-3,3.5 Z" fill="#333"/><g fill="none" stroke="#da291c" stroke-width="1.6" stroke-linejoin="round" stroke-linecap="round"><path d="M10.3,3 L17.3,3.3 L12.8,9.2 Q16.4,9.6 15.3,13.6 Q14.2,17.6 11,19.4"/><path d="M10.6,9.6 Q6,15 3.4,21.6 Q9.5,20.4 12.6,17.4"/><path d="M22.8,9.3 L17.3,10.7 L21.3,16.6 L13.6,19.1"/></g>
<text x="28" y="19.8" font-size="12.2" font-weight="bold" font-style="italic" fill="#da291c" stroke="#da291c" stroke-width="0.5" font-family="Liberation Sans" textLength="39.5" lengthAdjust="spacingAndGlyphs">SOLID</text>
<text x="67.8" y="19.8" font-size="12.2" font-style="italic" fill="#da291c" font-family="Liberation Sans" textLength="42" lengthAdjust="spacingAndGlyphs">WORKS</text><g transform="translate(531,14) rotate(45)"><path d="M-3,-6 H3 L2,-1.5 L4.5,1.5 H-4.5 L-2,-1.5 Z M0,1.5 V7.5" fill="#9a9a9a" stroke="#9a9a9a" stroke-width="1"/></g><path d="M543.5,0 V31" stroke="#cfcfcf" stroke-width="1"/><g transform="translate(575,14.5)"><path d="M-5.8,-0.5 V8.5 H5.8 V-0.5" fill="#fff" stroke="#333" stroke-width="1.3"/><rect x="-2" y="2.5" width="4" height="6" fill="#fff" stroke="#333" stroke-width="1.1"/><path d="M-8.5,1 L0,-7.5 L8.5,1" fill="none" stroke="#1b5a86" stroke-width="2.2" stroke-linejoin="miter"/></g><g transform="translate(605,14.8)"><path d="M-6.5,-8.5 H2 L6.5,-4 V8.5 H-6.5 Z" fill="#f0f0f0" stroke="#333" stroke-width="1.3" stroke-linejoin="round"/><path d="M2,-8.5 V-4 H6.5" fill="none" stroke="#333" stroke-width="1.1"/></g><path d="M623.8,12.8 h5.4 l-2.7,3.2 Z" fill="#333"/><g transform="translate(649,14.8)"><path d="M-8.5,7.5 V-7 H-3.5 L-2,-5 H3" fill="#e8e8e8" stroke="#333" stroke-width="1.2"/><path d="M-8.5,7.5 L-5,-1.5 H8.5 L5.5,7.5 Z" fill="#dcdcdc" stroke="#333" stroke-width="1.2" stroke-linejoin="round"/><path d="M-2.5,-8 Q4,-8 4.5,-3.5 H7.5 L3.5,1.5 L-0.5,-3.5 H2 Q1.5,-6 -2.5,-6 Z" fill="#2a78ad" stroke="#1b5a86" stroke-width="0.6"/></g><path d="M667.8,12.8 h5.4 l-2.7,3.2 Z" fill="#333"/><g transform="translate(692.7,14.8)"><path d="M-8.5,-8.5 H8.5 V8.5 H-6.5 L-8.5,6.5 Z" fill="#3b8fc6" stroke="#1b5a86" stroke-width="1.2"/><rect x="-5" y="-8" width="10" height="8" fill="#e4e4e4"/><rect x="-4.5" y="3" width="8" height="5.5" fill="#333"/><rect x="-3" y="4" width="2.2" height="3.5" fill="#e4e4e4"/></g><path d="M711.5999999999999,12.8 h5.4 l-2.7,3.2 Z" fill="#333"/><g transform="translate(737,15)"><path d="M-5.5,-3 V-8.5 H5.5 V-3" fill="#f4f4f4" stroke="#444" stroke-width="1.2"/><rect x="-8.5" y="-3" width="17" height="8" rx="1.5" fill="#3b8fc6" stroke="#1b5a86" stroke-width="1.2"/><path d="M-7,1 H7" stroke="#bfe0f5" stroke-width="1"/><path d="M-6,3.5 H6 V8 H-6 Z" fill="#f4f4f4" stroke="#444" stroke-width="1.1"/></g><path d="M755.5,12.8 h5.4 l-2.7,3.2 Z" fill="#333"/><g transform="translate(781,14.5)"><path d="M-8,-7 V-0.5 H-1.5 L-3.8,-2.8 Q1,-5 3.2,-0.5 Q4.5,3 1.5,6.5 L4,8 Q9,2.5 6,-3 Q2.5,-8.5 -5.8,-4.8 Z" fill="#3b8fc6" stroke="#1b5a86" stroke-width="1" stroke-linejoin="round"/></g><path d="M799.8,12.8 h5.4 l-2.7,3.2 Z" fill="#333"/><g transform="translate(825,14.5) scale(-1,1)"><path d="M-8,-7 V-0.5 H-1.5 L-3.8,-2.8 Q1,-5 3.2,-0.5 Q4.5,3 1.5,6.5 L4,8 Q9,2.5 6,-3 Q2.5,-8.5 -5.8,-4.8 Z" fill="#d9d9d9" stroke="#c2c2c2" stroke-width="1" stroke-linejoin="round"/></g><path d="M843.3,12.8 h5.4 l-2.7,3.2 Z" fill="#aaa"/><rect x="854.5" y="0.5" width="29.5" height="29" fill="#b9b9b9" stroke="#8f8f8f" stroke-width="1"/><rect x="884" y="0.5" width="13.5" height="29" fill="#fdfdfd" stroke="#a8a8a8" stroke-width="1"/><path d="M863.5,5.5 V20.5 L867,17.2 L869.5,23 L871.8,22 L869.3,16.3 H874.5 Z" fill="#fff" stroke="#222" stroke-width="1.1" stroke-linejoin="miter"/><path d="M887.9,12.8 h5.4 l-2.7,3.2 Z" fill="#333"/><rect x="908" y="6" width="10" height="17.5" rx="4.5" fill="#1c1c1c"/><circle cx="913" cy="10.8" r="2.9" fill="#e0201b"/><circle cx="913" cy="18.6" r="2.9" fill="#1f9a2c"/><circle cx="913" cy="10.2" r="0.9" fill="#ffb0a8"/><circle cx="913" cy="18" r="0.9" fill="#a6f0a8"/><g transform="translate(943,15)"><rect x="-7.8" y="-8.8" width="15.6" height="17.6" rx="1" fill="#f6f6f6" stroke="#333" stroke-width="1.3"/><rect x="-5.5" y="-6.5" width="4" height="3.4" fill="#3b8fc6" stroke="#1b5a86" stroke-width="0.7"/><rect x="-5.5" y="-1.7" width="4" height="3.4" fill="#3b8fc6" stroke="#1b5a86" stroke-width="0.7"/><rect x="-5.5" y="3.1" width="4" height="3.4" fill="#3b8fc6" stroke="#1b5a86" stroke-width="0.7"/><path d="M0.5,-4.8 H5.5 M0.5,0 H5.5 M0.5,4.8 H5.5" stroke="#333" stroke-width="1.1"/></g><path d="M980.44,13.13 L980.44,16.27 L978.40,16.59 L978.06,17.39 L979.28,19.06 L977.06,21.28 L975.39,20.06 L974.59,20.40 L974.27,22.44 L971.13,22.44 L970.81,20.40 L970.01,20.06 L968.34,21.28 L966.12,19.06 L967.34,17.39 L967.00,16.59 L964.96,16.27 L964.96,13.13 L967.00,12.81 L967.34,12.01 L966.12,10.34 L968.34,8.12 L970.01,9.34 L970.81,9.00 L971.13,6.96 L974.27,6.96 L974.59,9.00 L975.39,9.34 L977.06,8.12 L979.28,10.34 L978.06,12.01 L978.40,12.81 Z" fill="#f6f6f6" stroke="#333" stroke-width="1.2" stroke-linejoin="round"/><circle cx="972.7" cy="14.7" r="2.9" fill="#f6f6f6" stroke="#333" stroke-width="1.2"/><path d="M991.5999999999999,12.8 h5.4 l-2.7,3.2 Z" fill="#333"/></svg><!--ICONS_TOP_END--><!--HUD_START--><svg class="abs" style="left:730px;top:138px" width="370" height="26" viewBox="730 138 370 26"><defs>
<linearGradient id="ylh" x1="0" y1="0" x2="1" y2="1"><stop offset="0" stop-color="#ffe04a"/><stop offset="1" stop-color="#f39a1e"/></linearGradient>
<linearGradient id="tel" x1="0" y1="0" x2="1" y2="1"><stop offset="0" stop-color="#fafafa"/><stop offset="0.5" stop-color="#c9c9c9"/><stop offset="1" stop-color="#8f8f8f"/></linearGradient>
<linearGradient id="cf" x1="0" y1="0" x2="1" y2="1"><stop offset="0" stop-color="#b5dcf0"/><stop offset="1" stop-color="#5ea6cf"/></linearGradient>
<linearGradient id="mon" x1="0" y1="0" x2="1" y2="1"><stop offset="0" stop-color="#cfcfcf"/><stop offset="1" stop-color="#f1f1f1"/></linearGradient>
<radialGradient id="hl" cx="0.35" cy="0.3" r="0.75"><stop offset="0" stop-color="#fff" stop-opacity="0.85"/><stop offset="0.55" stop-color="#fff" stop-opacity="0"/></radialGradient>
<g id="gball"><circle r="8" fill="#d94a43"/><path d="M0,0 L0,-8 A8,8 0 0 0 -8,0.8 Z" fill="#4a8fdc"/><path d="M0,0 L-8,0.8 A8,8 0 0 0 1.5,7.86 Z" fill="#4cb04a"/><path d="M0,0 L1.5,7.86 A8,8 0 0 0 7.9,1.2 Z" fill="#e8c02a"/><circle r="8" fill="url(#hl)"/><circle r="8" fill="none" stroke="#8a6a5a" stroke-width="0.5" opacity="0.6"/></g>
<g id="tele"><path d="M6.5,-8 L9.5,-5 L-2,7.5 Q-5,9.5 -7.5,7 Q-9.5,4.5 -7,1.5 Z" fill="url(#tel)" stroke="#8a8a8a" stroke-width="0.9" stroke-linejoin="round"/><ellipse cx="-4.8" cy="4.5" rx="2.3" ry="3.3" transform="rotate(-42 -4.8 4.5)" fill="#ededed" stroke="#9a9a9a" stroke-width="0.8"/><path d="M2.5,-4.5 L6,-1" stroke="#9a9a9a" stroke-width="0.8"/></g>
</defs><g><path d="M744.3,152.3 L738.6,158.6" stroke="#3f86b4" stroke-width="3.8" stroke-linecap="round"/><path d="M744,152 L738.4,158.2" stroke="#8cc4e4" stroke-width="1.6" stroke-linecap="round"/><circle cx="748.2" cy="148" r="6" fill="#edf1f4" stroke="#8e8e8e" stroke-width="1.3"/><path d="M748.2,143.6 l1.8,1.8 h-3.6 Z M748.2,152.4 l1.8,-1.8 h-3.6 Z M743.8,148 l1.8,1.8 v-3.6 Z M752.6,148 l-1.8,1.8 v-3.6 Z" fill="#555"/></g><g><rect x="768.3" y="142.6" width="12.6" height="11.2" fill="none" stroke="#444" stroke-width="1" stroke-dasharray="2.6,1.8"/><path d="M769.3,153.6 L763.8,159.3" stroke="#3f86b4" stroke-width="3.8" stroke-linecap="round"/><path d="M769,153.3 L763.6,158.9" stroke="#8cc4e4" stroke-width="1.6" stroke-linecap="round"/><circle cx="773" cy="149.6" r="6" fill="#edf1f4" stroke="#8e8e8e" stroke-width="1.3"/></g><use href="#tele" transform="translate(797.5,150.5)"/><path d="M807,155.7 H801 M803,152.5 L798,155.7 L803,158.9 Z" stroke="#4a94c4" stroke-width="2" fill="#4a94c4"/><g transform="translate(824,151.3)"><path d="M-9,-2.5 Q-9,-8.5 0,-8.5 Q9,-8.5 9,-5 V5 L4.5,6 V-5 Q0,-7 -1.5,-4 V5 L-8.5,8.5 Q-9,8.5 -9,7 Z" fill="#cfd3d6" stroke="#4a4a4a" stroke-width="1"/><path d="M-1.5,-4 Q1,-6.5 4.5,-5 V5.5 Q1,4 -1.5,5.5 Z" fill="url(#tel)" stroke="#5a5a5a" stroke-width="0.7"/><path d="M-8.7,-1.5 L-1.5,-3.6 V5.5 L-8.7,8.5 Z" fill="#3b8fc6" stroke="#14507a" stroke-width="1"/><path d="M4.5,-4.8 L8.8,-5.5 V4.5 L4.5,6 Z" fill="#3b8fc6" stroke="#14507a" stroke-width="1"/><path d="M-7.8,1.5 L-2.5,-1.5 M-7.8,4.3 L-2.5,1.3 M-7.8,7 L-2.5,4 M5.2,-1.5 L8,-3.2 M5.2,1.3 L8,-0.4 M5.2,4 L8,2.3" stroke="#bfe3f7" stroke-width="1"/></g><use href="#tele" transform="translate(849,151)"/><path d="M846.5,141.3 L852.5,141.3 L848,145.7 L851.5,145.7 L840.5,152 L845,147.6 L841.6,147.6 Z" fill="url(#ylh)" stroke="#c8401a" stroke-width="0.8" stroke-linejoin="round"/><text x="855" y="160.3" font-size="12.5" font-weight="bold" text-anchor="middle" fill="#2a78ad" font-family="Liberation Serif">A</text><g><path d="M867.5,147.4 L873,142.5 H885 V154.5 L879.7,159.7" fill="#fff" stroke="#444" stroke-width="1"/><path d="M873,142.5 V147.4 M879.7,147.4 L885,142.5 M879,142.5 V147 M879.7,153.5 H885" stroke="#444" stroke-width="0.9" fill="none"/><rect x="867.5" y="147.4" width="12.2" height="12.3" fill="url(#cf)" stroke="#1b5a86" stroke-width="1"/><path d="M879,144.2 l-1.5,1.5 h3 Z M882.2,150.5 l1.5,-1.4 v2.8 Z" fill="#333"/></g><path d="M892.7,149.8 h5.6 l-2.8,3.2 Z" fill="#9a9a9a"/><g><path d="M908,145.5 L916,141.5 L925,144.5 V156 L916.5,159.8 L908,156.5 Z" fill="#fff" stroke="#555" stroke-width="1" stroke-linejoin="round"/><path d="M908,145.5 L916.5,148.5 V159.8 L908,156.5 Z" fill="url(#cf)" stroke="#555" stroke-width="0.8"/><path d="M916.5,148.5 L919.5,147.3 V158.5 L916.5,159.8 Z" fill="#2f7fb0"/><path d="M908,145.5 L916,141.5 L925,144.5 L916.5,148.5 Z" fill="#e4f1f8" stroke="#555" stroke-width="0.8"/><path d="M916.5,148.5 L925,144.5" stroke="#555" stroke-width="0.8"/></g><path d="M932.7,149.8 h5.6 l-2.8,3.2 Z" fill="#9a9a9a"/><g><path d="M947.3,151.5 Q956.3,141.5 965.3,151.5 Q956.3,161 947.3,151.5 Z" fill="#f0f0f0" stroke="#a8a8a8" stroke-width="1.1"/><circle cx="956.3" cy="151.3" r="4.3" fill="#8a8a8a"/><path d="M956.3,147 A4.3,4.3 0 0 0 956.3,155.6 Z" fill="#6a6a6a"/><circle cx="956.3" cy="151.3" r="1.8" fill="#4a4a4a"/><path d="M956.3,144.5 V158.5" stroke="#5a5a5a" stroke-width="1"/></g><path d="M972.7,149.8 h5.6 l-2.8,3.2 Z" fill="#9a9a9a"/><use href="#gball" transform="translate(995,148.8)"/><g transform="translate(1000,154.5) rotate(-45)"><rect x="-5" y="-2" width="10.5" height="4" fill="#f0c84a" stroke="#5a4a2a" stroke-width="0.8"/><path d="M-5,-2 L-8.5,0 L-5,2 Z" fill="#f4e2b8" stroke="#5a4a2a" stroke-width="0.8"/><path d="M-8.5,0 L-7,-0.9 V0.9 Z" fill="#222"/><rect x="5.5" y="-2" width="2.2" height="4" fill="#d86a6a" stroke="#5a4a2a" stroke-width="0.8"/></g><g><rect x="1012.2" y="149.5" width="18.6" height="11" fill="#3a3a3a"/><rect x="1013.5" y="157.3" width="3.6" height="2.6" fill="#f4f4f4"/><rect x="1019.8" y="157.3" width="3.6" height="2.6" fill="#f4f4f4"/><rect x="1026" y="157.3" width="3.6" height="2.6" fill="#f4f4f4"/><rect x="1016.6" y="154.3" width="3.2" height="2.2" fill="#e0e0e0"/><rect x="1023" y="154.3" width="3.2" height="2.2" fill="#e0e0e0"/></g><use href="#gball" transform="translate(1021.4,148.8)"/><path d="M1038.4,149.8 h5.6 l-2.8,3.2 Z" fill="#9a9a9a"/><g><rect x="1053.5" y="143.3" width="17.5" height="11.5" fill="url(#mon)" stroke="#4a4a4a" stroke-width="1.4"/><path d="M1062.2,154.8 V158 M1058,158.5 H1066.5" stroke="#4a4a4a" stroke-width="1.6"/></g><path d="M1078.7,149.8 h5.6 l-2.8,3.2 Z" fill="#9a9a9a"/></svg><!--HUD_END--><!--ICONS-->
</body></html>
